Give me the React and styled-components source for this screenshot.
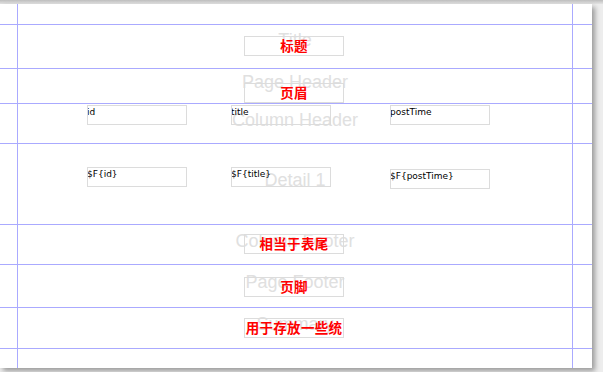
import React from "react"
import styled, { createGlobalStyle } from "styled-components"

const Global = createGlobalStyle`
  html, body {
    margin: 0;
    padding: 0;
    background: #ededed;
    overflow: hidden;
  }
`

const Viewport = styled.div`
  width: 603px;
  height: 372px;
  background: #ededed;
  overflow: hidden;
`

const TopEdge = styled.div`
  height: 4px;
  background: linear-gradient(#bdbdbd, #e4e4e4);
`

const Page = styled.div`
  width: 592px;
  height: 364px;
  background: #fff;
  box-shadow: 3px 3px 5px rgba(0, 0, 0, 0.35);
  display: flex;
  flex-direction: column;
  overflow: hidden;
`

const Band = styled.div`
  display: grid;
  grid-template-columns: 17px 556px 19px;
  height: ${p => p.h}px;
  flex: none;
  border-bottom: ${p => (p.last ? "none" : "1px solid #aaaaff")};
`

const Side = styled.div``

const Canvas = styled.div`
  position: relative;
  border-left: 1px solid #aaaaff;
  border-right: 1px solid #aaaaff;
`

const Label = styled.div`
  position: absolute;
  inset: 0;
  display: flex;
  align-items: center;
  justify-content: center;
  padding-bottom: ${p => 7 + (p.lift || 0)}px;
  font-family: "Liberation Sans", Arial, sans-serif;
  font-size: 18px;
  color: #e0e0e0;
  white-space: nowrap;
`

const Box = styled.div`
  position: absolute;
  left: ${p => p.x}px;
  top: ${p => p.y}px;
  width: 100px;
  height: 20px;
  box-sizing: border-box;
  border: 1px solid #dcdcdc;
  overflow: hidden;
  white-space: nowrap;
`

const CaptionBox = styled(Box)`
  display: flex;
  align-items: center;
  justify-content: center;
  font-family: "Noto Sans CJK SC", sans-serif;
  font-weight: 700;
  font-size: 13.5px;
  letter-spacing: 0.3px;
  color: #ff0000;
  line-height: 1;
`

const FieldBox = styled(Box)`
  font-family: "DejaVu Sans", Tahoma, sans-serif;
  font-size: 9px;
  line-height: 11px;
  color: #000;
  padding-top: 1px;
  text-indent: -1px;
`

const bands = [
  { h: 20 },
  { h: 43, label: "Title", lift: 6, captions: [{ x: 226, y: 11, text: "标题" }] },
  { h: 34, label: "Page Header", captions: [{ x: 226, y: 14, text: "页眉" }] },
  {
    h: 39,
    label: "Column Header",
    fields: [
      { x: 69, y: 1, text: "id" },
      { x: 213, y: 1, text: "title" },
      { x: 372, y: 1, text: "postTime" },
    ],
  },
  {
    h: 80,
    label: "Detail 1",
    fields: [
      { x: 69, y: 23, text: "$F{id}" },
      { x: 213, y: 23, text: "$F{title}" },
      { x: 372, y: 25, text: "$F{postTime}" },
    ],
  },
  { h: 39, label: "Column Footer", captions: [{ x: 226, y: 9, text: "相当于表尾" }] },
  { h: 42, label: "Page Footer", captions: [{ x: 226, y: 12, text: "页脚" }] },
  { h: 40, label: "Summary", captions: [{ x: 226, y: 10, text: "用于存放一些统" }] },
  { h: 19, last: true },
]

const App = () => {
  return (
    <Viewport>
      <Global />
      <TopEdge />
      <Page>
        {bands.map((b, i) => (
          <Band key={i} h={b.h} last={b.last}>
            <Side />
            <Canvas>
              {b.label && <Label lift={b.lift}>{b.label}</Label>}
              {(b.fields || []).map(f => (
                <FieldBox key={f.text} x={f.x} y={f.y}>
                  {f.text}
                </FieldBox>
              ))}
              {(b.captions || []).map(c => (
                <CaptionBox key={c.text} x={c.x} y={c.y}>
                  {c.text}
                </CaptionBox>
              ))}
            </Canvas>
            <Side />
          </Band>
        ))}
      </Page>
    </Viewport>
  )
}

export default App
